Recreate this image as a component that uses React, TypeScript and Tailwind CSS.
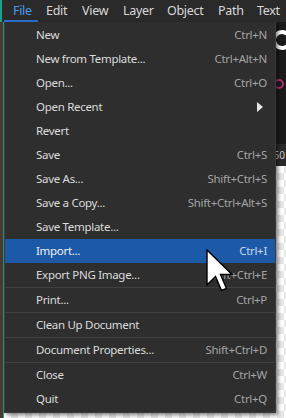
import { Fragment } from 'react';

type Item = { label: string; shortcut?: string; submenu?: boolean; active?: boolean; sep?: boolean };

// menubar entries with box widths so the labels land where the reference has them
const menus = [
  { label: 'File', w: 'w-[34px] pl-[9px]' },
  { label: 'Edit', w: 'w-[36px] pl-[8px]' },
  { label: 'View', w: 'w-[41px] pl-[8px]' },
  { label: 'Layer', w: 'w-[44px] pl-[8px]' },
  { label: 'Object', w: 'w-[51px] pl-[8px]' },
  { label: 'Path', w: 'w-[39px] pl-[8px]' },
  { label: 'Text', w: 'w-[35px] pl-[8px]' },
];

const items: Item[] = [
  { label: 'New', shortcut: 'Ctrl+N' },
  { label: 'New from Template...', shortcut: 'Ctrl+Alt+N' },
  { label: 'Open...', shortcut: 'Ctrl+O' },
  { label: 'Open Recent', submenu: true },
  { label: 'Revert' },
  { label: 'Save', shortcut: 'Ctrl+S' },
  { label: 'Save As...', shortcut: 'Shift+Ctrl+S' },
  { label: 'Save a Copy...', shortcut: 'Shift+Ctrl+Alt+S' },
  { label: 'Save Template...' },
  { label: 'Import...', shortcut: 'Ctrl+I', active: true },
  { label: 'Export PNG Image...', shortcut: 'Shift+Ctrl+E', sep: true },
  { label: 'Print...', shortcut: 'Ctrl+P', sep: true },
  { label: 'Clean Up Document', sep: true },
  { label: 'Document Properties...', shortcut: 'Shift+Ctrl+D', sep: true },
  { label: 'Close', shortcut: 'Ctrl+W' },
  { label: 'Quit', shortcut: 'Ctrl+Q' },
];

function Cursor() {
  return (
    <svg width="28" height="50" viewBox="0 0 28 50" className="absolute left-[206px] top-[249px]">
      <path
        d="M1 1 L1 36 L9.5 27.5 L15.5 41.5 L20.5 39.5 L14.5 25.5 L26 25.5 Z"
        fill="#ffffff"
        stroke="#000000"
        strokeWidth="1.4"
      />
    </svg>
  );
}

export default function App() {
  return (
    <div className="relative w-[286px] h-[418px] overflow-hidden bg-[#1f1f1f] text-[#dcdcdc]" style={{ fontFamily: '"Noto Sans", "Open Sans", sans-serif' }}>
      {/* menubar */}
      <div className="flex h-[22px] items-center bg-[#2a2a2a] border-l-2 border-[#1fa08e] pl-[2px]">
        {menus.map((m, i) => (
          <div
            key={m.label}
            className={`h-full shrink-0 flex items-center text-[12.5px] tracking-[-0.3px] whitespace-nowrap ${m.w} ${
              i === 0 ? 'text-[#4a9cf0] border-b-2 border-[#2d6fd0] pt-[2px]' : 'text-[#d8d8d8]'
            }`}
          >
            {m.label}
          </div>
        ))}
      </div>

      {/* workspace behind the menu */}
      <div className="flex h-[396px]">
        <div className="w-[3px] bg-[#4a3a30]" />
        <div className="w-[1px] bg-[#1fa08e]" />
        <div className="flex-1 flex flex-col">
          <div className="h-[122px] bg-[#1b1b1b] relative">
            <div className="absolute left-[268px] top-[8px] w-[20px] h-[20px] rounded-full border-[4px] border-white" />
            <div className="absolute left-[270px] top-[57px] w-[10px] h-[10px] rounded-full border-[2px] border-[#b0306a]" />
          </div>
          <div className="h-[22px] bg-[#2a2a2a] flex items-center justify-end pr-[1px] text-[10px] text-[#cfcfcf]">50</div>
          <div className="flex-1 bg-[#f2f2f2] bg-[repeating-conic-gradient(#ffffff_0_25%,#e8e8e8_0_50%)] bg-[length:14px_14px]" />
        </div>
      </div>

      {/* dropdown */}
      <div className="absolute left-[4px] top-[22px] w-[272px] bg-[#2e2e2e] border border-[#3a3a3a] border-t-0 shadow-[2px_2px_4px_rgba(0,0,0,0.5)] py-[1px]">
        {items.map((it) => (
          <Fragment key={it.label}>
            <div
              className={`flex items-center h-[24px] pl-[31px] pr-[8px] text-[11.5px] tracking-[-0.3px] ${
                it.active ? 'bg-[#1c5aa8] text-[#f0f0f0]' : 'text-[#dcdcdc]'
              }`}
            >
              <span className="flex-1 whitespace-nowrap">{it.label}</span>
              {it.shortcut && (
                <span className={`whitespace-nowrap ${it.active ? 'text-[#c8d6ea]' : 'text-[#a4a4a4]'}`}>{it.shortcut}</span>
              )}
              {it.submenu && (
                <svg width="8" height="10" viewBox="0 0 8 10" className="mr-[3px]">
                  <path d="M1 0 L7 5 L1 10 Z" fill="#e8e8e8" />
                </svg>
              )}
            </div>
            {it.sep && <div className="h-[1px] bg-[#404040]" />}
          </Fragment>
        ))}
      </div>

      <Cursor />
    </div>
  );
}
